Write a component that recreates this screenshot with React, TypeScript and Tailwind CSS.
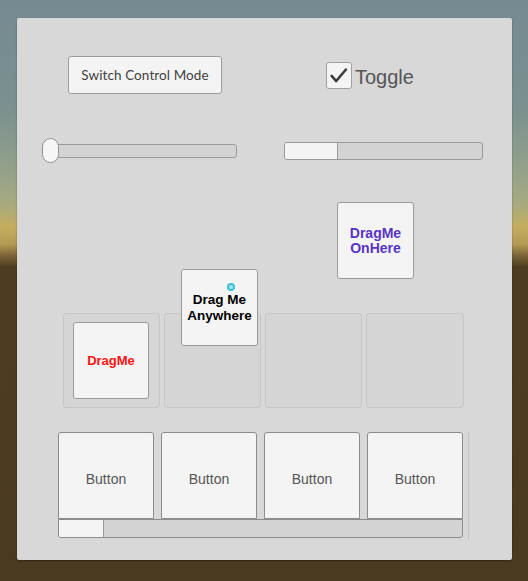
export default function App() {
  return (
    <div className="w-[528px] h-[581px] overflow-hidden pt-[18px] pl-[17px] bg-[linear-gradient(to_bottom,#768a92_0%,#7b908f_19%,#93a18a_29%,#a6aa80_35%,#c4ad5f_39%,#b39a55_42%,#7a6436_44%,#4d3c21_46%,#4a3a1f_100%)]">
      <div className="relative w-[495px] h-[542px] bg-[#d8d8d8] rounded-[2px] shadow-[0_1px_2px_rgba(0,0,0,0.35)] flex flex-col pt-[38px]">
        {/* Top row */}
        <div className="flex items-center h-[38px]">
          <button className="ml-[51px] w-[154px] h-[38px] bg-[#f4f4f4] border border-[#9c9c9c] rounded-[3px] text-[13.5px] tracking-[0.1px] text-[#3f3f3f] font-['Lato',sans-serif]">
            Switch Control Mode
          </button>
          <div className="ml-[104px] flex items-center">
            <div className="w-[26px] h-[27px] bg-[#f4f4f4] border border-[#a0a0a0] rounded-[3px] flex items-center justify-center">
              <svg viewBox="0 0 26 27" className="w-[26px] h-[27px]">
                <polyline
                  points="5,14 10,19.5 20.5,7"
                  fill="none"
                  stroke="#3c3c3c"
                  strokeWidth={2.8}
                  strokeLinecap="round"
                  strokeLinejoin="round"
                />
              </svg>
            </div>
            <span className="ml-[3px] text-[20px] text-[#555] font-['Liberation_Sans',sans-serif] leading-none mt-[3px]">
              Toggle
            </span>
          </div>
        </div>

        {/* Sliders */}
        <div className="flex items-center mt-[44px] ml-[25px] h-[25px]">
          <div className="relative w-[195px] h-[25px] flex items-center">
            <div className="w-full h-[14px] bg-[#d3d3d3] border border-[#9a9a9a] rounded-[3px] ml-[1px]" />
            <div className="absolute left-0 top-0 w-[17px] h-[25px] rounded-full bg-[#f6f6f6] border border-[#8e8e8e]" />
          </div>
          <div className="ml-[47px] w-[199px] h-[18px] bg-[#d3d3d3] border border-[#9a9a9a] rounded-[3px] flex">
            <div className="w-[53px] h-full bg-[#f4f4f4] border-r border-[#9a9a9a] rounded-l-[2px]" />
          </div>
        </div>

        {/* Floating drag items */}
        <div className="absolute left-[320px] top-[184px] w-[77px] h-[77px] bg-[#f4f4f4] border border-[#9a9a9a] rounded-[3px] flex items-center justify-center text-center text-[14px] leading-[15px] font-bold text-[#5834c4] font-['Liberation_Sans',sans-serif]">
          DragMe
          <br />
          OnHere
        </div>
        <div className="absolute z-10 left-[164px] top-[251px] w-[77px] h-[77px] bg-[#f4f4f4] border border-[#9a9a9a] rounded-[3px] flex items-center justify-center text-center text-[13.5px] leading-[16px] font-bold text-black font-['Liberation_Sans',sans-serif]">
          Drag Me
          <br />
          Anywhere
          <span className="absolute left-[45px] top-[13px] w-[8px] h-[8px] rounded-full bg-[#9ee6ef] border-2 border-[#3cc3d6]" />
        </div>

        {/* Slots */}
        <div className="flex gap-[4px] ml-[46px] mt-[150px]">
          <div className="w-[97px] h-[95px] border border-[#c6c6c6] rounded-[3px] bg-[#d5d5d5] pt-[8px] pl-[9px]">
            <div className="w-[76px] h-[77px] bg-[#f4f4f4] border border-[#9a9a9a] rounded-[3px] flex items-center justify-center text-[13px] font-bold text-[#ff1212] font-['Liberation_Sans',sans-serif]">
              DragMe
            </div>
          </div>
          <div className="w-[97px] h-[95px] border border-[#c6c6c6] rounded-[3px] bg-[#d5d5d5]" />
          <div className="w-[97px] h-[95px] border border-[#c6c6c6] rounded-[3px] bg-[#d5d5d5]" />
          <div className="w-[98px] h-[95px] border border-[#c6c6c6] rounded-[3px] bg-[#d5d5d5]" />
        </div>

        {/* Scroll view with buttons */}
        <div className="ml-[40px] mt-[24px] w-[412px] h-[108px] border-r border-[#c2c2c2] flex flex-col">
          <div className="flex gap-[7px] pl-[1px]">
            {['Button', 'Button', 'Button', 'Button'].map((label, i) => (
              <div
                key={i}
                className="w-[96px] h-[87px] pt-[8px] bg-[#f4f4f4] border border-[#8c8c8c] rounded-t-[3px] flex items-center justify-center text-[14px] text-[#555] font-['Liberation_Sans',sans-serif]"
              >
                {label}
              </div>
            ))}
          </div>
          <div className="w-[405px] h-[19px] ml-[1px] bg-[#d3d3d3] border border-[#8c8c8c] rounded-b-[3px] flex">
            <div className="w-[45px] h-full bg-[#f4f4f4] border-r border-[#9a9a9a] rounded-bl-[2px]" />
          </div>
        </div>
      </div>
    </div>
  );
}
